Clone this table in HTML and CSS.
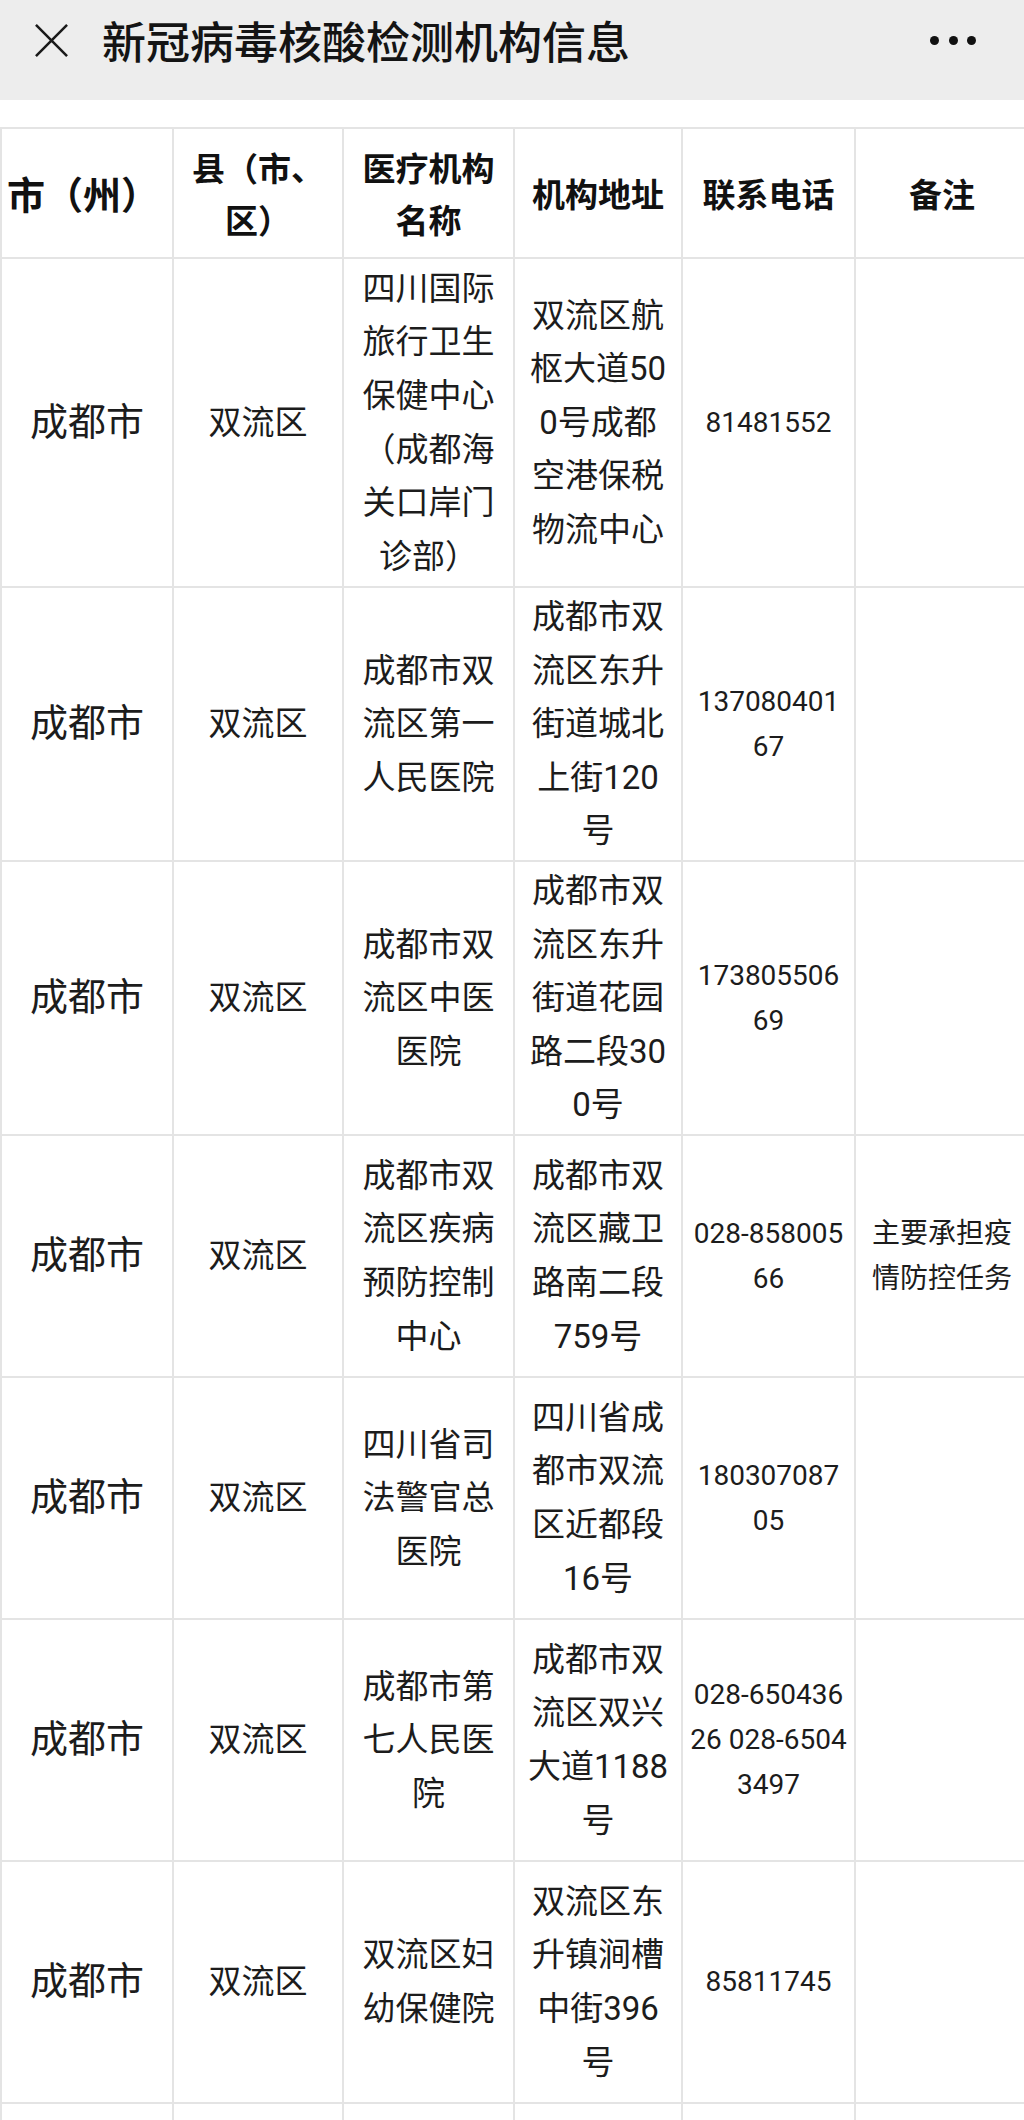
FILE: index.html
```html
<!DOCTYPE html>
<html lang="zh-CN">
<head>
<meta charset="utf-8">
<title>新冠病毒核酸检测机构信息</title>
<link rel="stylesheet" href="styles.css">
</head>
<body>
<div class="page">
  <header class="topbar">
    <div class="bar-row">
      <svg class="close-icon" viewBox="0 0 36 36" aria-hidden="true">
        <path d="M2 2 L34 34 M34 2 L2 34" />
      </svg>
      <h1 class="title">新冠病毒核酸检测机构信息</h1>
      <div class="more" aria-label="更多">
        <span class="dot"></span><span class="dot"></span><span class="dot"></span>
      </div>
    </div>
  </header>

  <div class="table-wrap">
    <table class="info-table">
      <colgroup>
        <col class="c-city">
        <col class="c-county">
        <col class="c-org">
        <col class="c-addr">
        <col class="c-phone">
        <col class="c-note">
      </colgroup>
      <thead>
        <tr class="head-row">
          <th class="city">市（州）</th>
          <th>县（市、<br>区）</th>
          <th>医疗机构<br>名称</th>
          <th>机构地址</th>
          <th>联系电话</th>
          <th>备注</th>
        </tr>
      </thead>
      <tbody>
        <tr class="lines-6">
          <td class="city">成都市</td>
          <td>双流区</td>
          <td>四川国际<br>旅行卫生<br>保健中心<br>（成都海<br>关口岸门<br>诊部）</td>
          <td>双流区航<br>枢大道50<br>0号成都<br>空港保税<br>物流中心</td>
          <td class="small">81481552</td>
          <td class="small"></td>
        </tr>
        <tr class="lines-5">
          <td class="city">成都市</td>
          <td>双流区</td>
          <td>成都市双<br>流区第一<br>人民医院</td>
          <td>成都市双<br>流区东升<br>街道城北<br>上街120<br>号</td>
          <td class="small">137080401<br>67</td>
          <td class="small"></td>
        </tr>
        <tr class="lines-5">
          <td class="city">成都市</td>
          <td>双流区</td>
          <td>成都市双<br>流区中医<br>医院</td>
          <td>成都市双<br>流区东升<br>街道花园<br>路二段30<br>0号</td>
          <td class="small">173805506<br>69</td>
          <td class="small"></td>
        </tr>
        <tr class="lines-4">
          <td class="city">成都市</td>
          <td>双流区</td>
          <td>成都市双<br>流区疾病<br>预防控制<br>中心</td>
          <td>成都市双<br>流区藏卫<br>路南二段<br>759号</td>
          <td class="small">028-858005<br>66</td>
          <td class="small">主要承担疫<br>情防控任务</td>
        </tr>
        <tr class="lines-4">
          <td class="city">成都市</td>
          <td>双流区</td>
          <td>四川省司<br>法警官总<br>医院</td>
          <td>四川省成<br>都市双流<br>区近都段<br>16号</td>
          <td class="small">180307087<br>05</td>
          <td class="small"></td>
        </tr>
        <tr class="lines-4">
          <td class="city">成都市</td>
          <td>双流区</td>
          <td>成都市第<br>七人民医<br>院</td>
          <td>成都市双<br>流区双兴<br>大道1188<br>号</td>
          <td class="small">028-650436<br>26 028-6504<br>3497</td>
          <td class="small"></td>
        </tr>
        <tr class="lines-4">
          <td class="city">成都市</td>
          <td>双流区</td>
          <td>双流区妇<br>幼保健院</td>
          <td>双流区东<br>升镇涧槽<br>中街396<br>号</td>
          <td class="small">85811745</td>
          <td class="small"></td>
        </tr>
        <tr class="lines-4">
          <td class="city"></td>
          <td></td>
          <td></td>
          <td></td>
          <td class="small"></td>
          <td class="small"></td>
        </tr>
      </tbody>
    </table>
  </div>
</div>
</body>
</html>
```

FILE: styles.css
```css
html, body {
  margin: 0;
  padding: 0;
  background: #ffffff;
}

body {
  font-family: Roboto, "Noto Sans CJK SC", "Noto Sans", sans-serif;
  color: #1c1c1c;
}

.page {
  width: 1024px;
  height: 2120px;
  overflow: hidden;
}

/* ---------- top bar ---------- */
.topbar {
  height: 100px;
  background: #ededed;
}

.bar-row {
  height: 80px;
  display: flex;
  align-items: center;
  padding: 0 48px 0 34px;
}

.close-icon {
  width: 35px;
  height: 35px;
  flex: none;
  fill: none;
  stroke: #1a1a1a;
  stroke-width: 2.6;
}

.title {
  margin: 0 0 0 33px;
  font-family: "Noto Sans CJK SC", sans-serif;
  font-size: 44px;
  font-weight: 500;
  line-height: 1;
  color: #141414;
}

.more {
  margin-left: auto;
  display: flex;
  gap: 9.5px;
  align-items: center;
}

.dot {
  width: 9px;
  height: 9px;
  border-radius: 50%;
  background: #111111;
}

/* ---------- table ---------- */
.table-wrap {
  margin-top: 27px;
  width: 1024px;
  overflow: hidden;
}

.info-table {
  width: 1028px;
  table-layout: fixed;
  border-collapse: collapse;
}

.c-city { width: 172px; }
.c-county { width: 170px; }
.c-org { width: 171px; }
.c-addr { width: 168px; }
.c-phone { width: 173px; }
.c-note { width: 174px; }

.info-table th,
.info-table td {
  border: 2px solid #e4e4e4;
  padding: 2px 6px;
  text-align: center;
  vertical-align: middle;
  white-space: nowrap;
  font-size: 33px;
  line-height: 53.6px;
}

.info-table th {
  font-family: "Noto Sans CJK SC", sans-serif;
  font-weight: 700;
  color: #111111;
  line-height: 52px;
}

.info-table .city {
  font-size: 38px;
}

.info-table th.city {
  padding-left: 2px;
  padding-right: 10px;
}

.info-table td.small {
  font-size: 28px;
  line-height: 45px;
}

.head-row { height: 130px; }
.lines-6 { height: 329px; }
.lines-5 { height: 273px; }
.lines-4 { height: 242px; }
```
